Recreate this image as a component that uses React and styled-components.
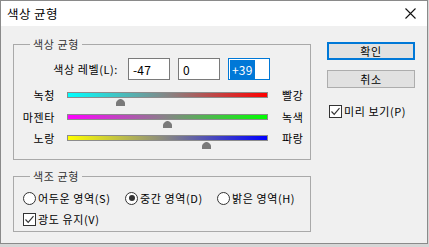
import React from 'react'
import styled, { createGlobalStyle } from 'styled-components'

const Global = createGlobalStyle`
  body {
    margin: 0;
    background: #d6d6d6;
    font-family: "Noto Sans CJK KR", "Noto Sans", sans-serif;
    color: #000;
  }
`

const Window = styled.div`
  width: 428px;
  height: 244px;
  box-sizing: border-box;
  border: 1px solid #8a8a8a;
  background: #f0f0f0;
  display: flex;
  flex-direction: column;
`

const TitleBar = styled.div`
  height: 25px;
  background: #fff;
  display: flex;
  align-items: center;
  justify-content: space-between;
  padding: 0 11px 0 6px;
  font-size: 12.5px;
  letter-spacing: 0.4px;
`

const Body = styled.div`
  display: flex;
  gap: 16px;
  padding: 10px 0 0 12px;
  letter-spacing: 0.6px;
`

const LeftCol = styled.div`
  width: 298px;
  display: flex;
  flex-direction: column;
  gap: 8px;
`

const Group = styled.fieldset`
  margin: 0;
  padding: 0;
  border: 1px solid #a9a9a9;
  min-inline-size: 0;
`

const Legend = styled.legend`
  margin-left: 16px;
  padding: 0 3px;
  font-size: 11px;
  line-height: 16px;
  color: #333;
`

const GroupBody = styled.div`
  padding: ${p => p.$pad};
  display: flex;
  flex-direction: column;
  gap: ${p => p.$gap || '0px'};
`

const LevelRow = styled.div`
  display: flex;
  align-items: center;
  gap: 8px;
`

const LevelLabel = styled.div`
  width: 104px;
  margin-right: 2px;
  text-align: right;
  font-size: 11px;
`

const NumBox = styled.div`
  width: 42px;
  height: 22px;
  box-sizing: border-box;
  background: #fff;
  border: 1px solid ${p => (p.$focused ? '#0078d7' : '#7a7a7a')};
  display: flex;
  align-items: center;
  padding-left: ${p => (p.$focused ? '1px' : '4px')};
  font-size: 12px;
  letter-spacing: 0.2px;
`

const Selected = styled.span`
  background: #0078d7;
  color: #fff;
  padding: 1px 2px;
  line-height: 17px;
`

const Sliders = styled.div`
  display: flex;
  flex-direction: column;
  gap: 15.5px;
  margin-top: 12px;
  padding-bottom: 18px;
`

const SliderRow = styled.div`
  display: grid;
  grid-template-columns: 41px 201px auto;
  column-gap: 12px;
  align-items: start;
  height: 6px;
  font-size: 11px;
`

const SideLabel = styled.div`
  margin-top: -4px;
  line-height: 14px;
  text-align: ${p => (p.$right ? 'left' : 'right')};
  margin-left: ${p => (p.$right ? '2px' : '0')};
  white-space: nowrap;
`

const Track = styled.div`
  position: relative;
  height: 6px;
  box-sizing: border-box;
  border: 1px solid #8c8c8c;
  background: linear-gradient(to right, ${p => p.$from}, #858585, ${p => p.$to});
`

const Thumb = styled.svg`
  position: absolute;
  top: 6px;
  width: 9px;
  height: 7px;
`

const OptionRow = styled.div`
  display: grid;
  grid-template-columns: 102px 92px auto;
  padding-left: 9px;
  height: 16px;
  align-items: center;
  font-size: 11px;
`

const Option = styled.label`
  display: flex;
  align-items: center;
  gap: 2px;
  white-space: nowrap;
`

const Radio = styled.span`
  width: 13px;
  height: 13px;
  box-sizing: border-box;
  border-radius: 50%;
  border: 1px solid #333;
  background: #fff;
  display: flex;
  align-items: center;
  justify-content: center;
  &::after {
    content: '';
    width: 6px;
    height: 6px;
    border-radius: 50%;
    background: ${p => (p.$checked ? '#333' : 'transparent')};
  }
`

const CheckRow = styled.label`
  display: flex;
  align-items: center;
  gap: 2px;
  height: 16px;
  padding-left: ${p => p.$indent || '0px'};
  font-size: 11px;
  white-space: nowrap;
`

const RightCol = styled.div`
  width: 88px;
  display: flex;
  flex-direction: column;
  padding-top: 6px;
`

const Button = styled.button`
  width: 88px;
  height: 18px;
  box-sizing: border-box;
  margin: 0 0 ${p => p.$mb || '0px'};
  padding: 0;
  background: #e1e1e1;
  border: ${p => (p.$primary ? '2px solid #0078d7' : '1px solid #adadad')};
  font-family: inherit;
  font-size: 11px;
  letter-spacing: 0.6px;
  line-height: 14px;
  color: #000;
`

const CheckBox = () => (
  <svg width="13" height="13" viewBox="0 0 13 13">
    <rect x="0.5" y="0.5" width="12" height="12" fill="#fff" stroke="#333" />
    <path d="M2.5 6.5 L5.2 9.3 L10.5 3.2" fill="none" stroke="#333" strokeWidth="1.2" />
  </svg>
)

const sliders = [
  { left: '녹청', right: '빨강', from: '#00ffff', to: '#ff0000', value: -47 },
  { left: '마젠타', right: '녹색', from: '#ff00ff', to: '#00ff00', value: 0 },
  { left: '노랑', right: '파랑', from: '#ffff00', to: '#0000ff', value: 39 },
]

export default function App() {
  return (
    <>
      <Global />
      <Window>
        <TitleBar>
          <span>색상 균형</span>
          <svg width="11" height="11" viewBox="0 0 11 11">
            <path d="M0.5 0.5 L10.5 10.5 M10.5 0.5 L0.5 10.5" stroke="#111" strokeWidth="1.1" />
          </svg>
        </TitleBar>
        <Body>
          <LeftCol>
            <Group>
              <Legend>색상 균형</Legend>
              <GroupBody $pad="6px 0 0 0">
                <LevelRow>
                  <LevelLabel>색상 레벨(L):</LevelLabel>
                  <NumBox>-47</NumBox>
                  <NumBox>0</NumBox>
                  <NumBox $focused><Selected>+39</Selected></NumBox>
                </LevelRow>
                <Sliders>
                  {sliders.map(s => (
                    <SliderRow key={s.left}>
                      <SideLabel>{s.left}</SideLabel>
                      <Track $from={s.from} $to={s.to}>
                        <Thumb viewBox="0 0 9 7" style={{ left: ((s.value + 100) / 200) * 199 - 4.5 }}>
                          <path d="M4.5 0 C6.5 0 9 2.5 9 4 L9 7 L0 7 L0 4 C0 2.5 2.5 0 4.5 0 Z" fill="#7a7a7a" />
                        </Thumb>
                      </Track>
                      <SideLabel $right>{s.right}</SideLabel>
                    </SliderRow>
                  ))}
                </Sliders>
              </GroupBody>
            </Group>
            <Group>
              <Legend>색조 균형</Legend>
              <GroupBody $pad="6px 0 4px 0" $gap="5px">
                <OptionRow>
                  <Option><Radio />어두운 영역(S)</Option>
                  <Option><Radio $checked />중간 영역(D)</Option>
                  <Option><Radio />밝은 영역(H)</Option>
                </OptionRow>
                <CheckRow $indent="9px"><CheckBox />광도 유지(V)</CheckRow>
              </GroupBody>
            </Group>
          </LeftCol>
          <RightCol>
            <Button $primary $mb="10px">확인</Button>
            <Button $mb="15px">취소</Button>
            <CheckRow $indent="2px"><CheckBox />미리 보기(P)</CheckRow>
          </RightCol>
        </Body>
      </Window>
    </>
  )
}
